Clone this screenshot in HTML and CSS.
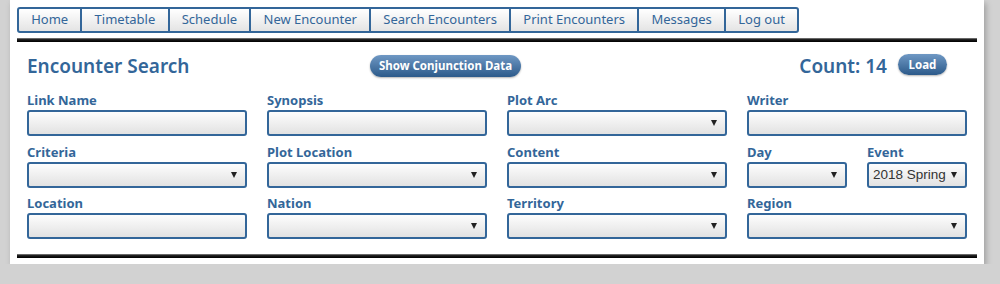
FILE: index.html
```html
<!DOCTYPE html>
<html lang="en">
<head>
    <meta charset="UTF-8">
    <title>Encounter Search</title>
    <link rel="stylesheet" href="styles.css">
</head>
<body>
    <div class="page">
        <ul class="nav">
            <li>Home</li>
            <li>Timetable</li>
            <li>Schedule</li>
            <li>New Encounter</li>
            <li>Search Encounters</li>
            <li>Print Encounters</li>
            <li>Messages</li>
            <li>Log out</li>
        </ul>
        <div class="rule"></div>

        <div class="search">
            <div class="search-head">
                <h1>Encounter Search</h1>
                <button class="pill conj">Show Conjunction Data</button>
                <div class="count">
                    <span>Count: 14</span>
                    <button class="pill load">Load</button>
                </div>
            </div>

            <div class="fields">
                <div class="field">
                    <label>Link Name</label>
                    <input type="text">
                </div>
                <div class="field">
                    <label>Synopsis</label>
                    <input type="text">
                </div>
                <div class="field">
                    <label>Plot Arc</label>
                    <span class="select"><select></select></span>
                </div>
                <div class="field">
                    <label>Writer</label>
                    <input type="text">
                </div>

                <div class="field">
                    <label>Criteria</label>
                    <span class="select"><select></select></span>
                </div>
                <div class="field">
                    <label>Plot Location</label>
                    <span class="select"><select></select></span>
                </div>
                <div class="field">
                    <label>Content</label>
                    <span class="select"><select></select></span>
                </div>
                <div class="field split">
                    <div>
                        <label>Day</label>
                        <span class="select"><select></select></span>
                    </div>
                    <div>
                        <label>Event</label>
                        <span class="select"><select><option>2018 Spring</option></select></span>
                    </div>
                </div>

                <div class="field">
                    <label>Location</label>
                    <input type="text">
                </div>
                <div class="field">
                    <label>Nation</label>
                    <span class="select"><select></select></span>
                </div>
                <div class="field">
                    <label>Territory</label>
                    <span class="select"><select></select></span>
                </div>
                <div class="field">
                    <label>Region</label>
                    <span class="select"><select></select></span>
                </div>
            </div>
        </div>
        <div class="rule bottom"></div>
    </div>
</body>
</html>
```

FILE: styles.css
```css
:root {
    --blue: #336699;
    --field-bg: linear-gradient(#fdfdfd, #e2e2e2);
}

* {
    box-sizing: border-box;
    margin: 0;
    padding: 0;
}

body {
    background: #d2d2d2;
    font-family: 'Noto Sans', Arial, sans-serif;
    color: var(--blue);
}

.page {
    width: 974px;
    margin-left: 10px;
    background: white;
    padding: 7px 7px 6px;
    box-shadow: 2px 3px 6px rgba(0,0,0,0.25);
}

.nav {
    list-style: none;
    display: inline-flex;
    border: 2px solid var(--blue);
    border-radius: 3px;
    background: linear-gradient(#ffffff, #e4e4e4);
}

.nav li {
    height: 22px;
    line-height: 21px;
    padding: 0 12.2px;
    font-size: 13px;
    border-left: 2px solid var(--blue);
}

.nav li:first-child {
    border-left: none;
}

.rule {
    height: 4px;
    margin-top: 5px;
    background: linear-gradient(#8a8a8a, #1a1a1a 40%, #000);
}

.rule.bottom {
    margin-top: 15px;
}

.search {
    padding: 0 10px;
}

.search-head {
    display: flex;
    align-items: center;
    height: 50px;
    padding-bottom: 3px;
}

.search-head h1 {
    font-size: 19px;
    font-weight: 600;
    width: 343px;
}

.pill {
    border: none;
    border-radius: 12px;
    background: linear-gradient(#6f98c4, #2c5a8a);
    color: white;
    font-family: 'Noto Sans', Arial, sans-serif;
    font-weight: bold;
    font-size: 11.5px;
    box-shadow: 0 1px 2px rgba(0,0,0,0.3);
}

.conj {
    width: 151px;
    height: 22px;
}

.count {
    margin-left: auto;
    display: flex;
    align-items: center;
    gap: 11px;
    margin-right: 20px;
}

.count span {
    font-size: 19px;
    font-weight: 600;
}

.load {
    width: 49px;
    height: 21px;
    margin-top: -2px;
}

.fields {
    display: grid;
    grid-template-columns: repeat(4, 220px);
    column-gap: 20px;
    row-gap: 7.5px;
}

.field label {
    display: block;
    font-size: 13px;
    font-weight: bold;
    line-height: 16px;
    margin-bottom: 2px;
}

.field.split {
    display: grid;
    grid-template-columns: 100px 100px;
    column-gap: 20px;
}

input, select {
    display: block;
    width: 100%;
    height: 26px;
    border: 2px solid var(--blue);
    border-radius: 3px;
    background: var(--field-bg);
    appearance: none;
    font-family: 'Liberation Sans', Arial, sans-serif;
    font-size: 13.5px;
    color: #333;
    padding: 0 18px 0 4px;
    outline: none;
}

.select {
    display: block;
    position: relative;
}

.select::after {
    content: "";
    position: absolute;
    right: 10px;
    top: 10px;
    border-left: 3.5px solid transparent;
    border-right: 3.5px solid transparent;
    border-top: 6px solid #222;
}
```
